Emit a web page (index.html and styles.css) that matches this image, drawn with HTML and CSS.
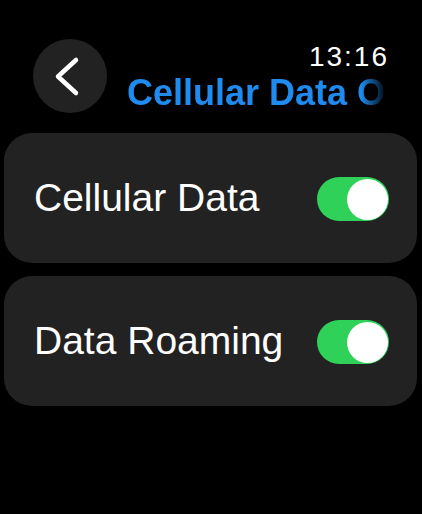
FILE: index.html
```html
<!DOCTYPE html>
<html>
<head>
	<meta charset="utf-8"/>
	<title>Cellular Data Options</title>
	<link rel="stylesheet" href="styles.css">
</head>
<body>
	<div class="header">
		<div class="back">
			<svg width="74" height="74" viewBox="0 0 74 74">
				<polyline points="43,21 25,37.5 43,54" fill="none" stroke="#fff" stroke-width="4.5" stroke-linecap="round" stroke-linejoin="round"/>
			</svg>
		</div>
		<div class="titles">
			<div class="time">13:16</div>
			<div class="title">Cellular Data Options</div>
		</div>
	</div>
	<div class="list">
		<div class="card">
			<span class="label">Cellular Data</span>
			<span class="toggle on"><span class="knob"></span></span>
		</div>
		<div class="card">
			<span class="label">Data Roaming</span>
			<span class="toggle on"><span class="knob"></span></span>
		</div>
	</div>
</body>
</html>
```

FILE: styles.css
```css
html, body { height:100%; overflow:hidden; }
body { margin:0; background:#000; color:#fff; font-family:"Liberation Sans", Arial, sans-serif; }

.header{display:flex;padding:39px 35px 0 33px;height:74px;}
.back{width:74px;height:74px;border-radius:50%;background:#222;flex:none;}
.back svg{display:block;}
.titles{flex:1;min-width:0;margin-left:20px;padding-top:5px;}
.time{font-size:28px;line-height:26px;letter-spacing:2px;margin-right:-2px;text-align:right;}
.title{font-size:36px;line-height:36px;font-weight:bold;color:#1f8bef;white-space:nowrap;overflow:hidden;margin-top:5px;
	-webkit-mask-image:linear-gradient(to right,#000 90%,transparent 100%);mask-image:linear-gradient(to right,#000 90%,transparent 100%);}

.list{display:flex;flex-direction:column;gap:13px;padding:20px 5px 0 4px;}
.card{display:flex;align-items:center;justify-content:space-between;height:130px;border-radius:28px;background:#222;padding:0 28px 0 30px;}
.label{font-size:39px;line-height:40px;}
.toggle{display:flex;align-items:center;width:72px;height:44px;border-radius:22px;background:#555;padding:0 1px;box-sizing:border-box;margin-top:2px;}
.toggle.on{background:#30d158;justify-content:flex-end;}
.knob{width:41px;height:41px;border-radius:50%;background:#fff;}
```
